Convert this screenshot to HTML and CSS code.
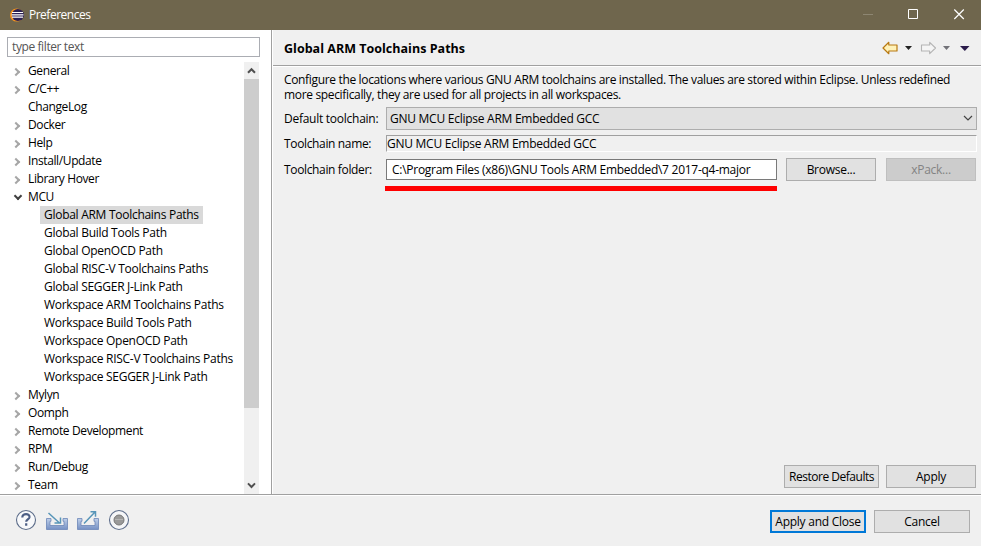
FILE: index.html
```
<!DOCTYPE html>
<html lang="en">
<head>
<meta charset="utf-8">
<title>Preferences</title>
<link rel="stylesheet" href="styles.css">
</head>
<body>
<div class="window">
  <header class="titlebar">
    <svg class="logo" width="14" height="14" viewBox="0 0 14 14"><circle cx="6.6" cy="7" r="6.6" fill="#f7941e"/><circle cx="7.9" cy="7" r="6.1" fill="#2c2255"/><path d="M2 4.5h11M1.5 6.8h12M2 9.1h11" stroke="#fff" stroke-width="1.2"/></svg>
    <span class="window-title">Preferences</span>
    <svg class="controls" width="112" height="30" viewBox="0 0 112 30" fill="none"><path d="M2 14.5h10" stroke="#8d8672"/><path d="M47.5 9.5h9v9h-9z" stroke="#fff"/><path d="M93.3 9.5l9.5 9.5m0-9.5L93.3 19" stroke="#fff" stroke-width="1.2"/></svg>
  </header>
  <main class="body">
    <aside class="sidebar">
      <div class="filter">type filter text</div>
      <div class="tree-wrap">
        <ul class="tree">
          <li class="closed"><span>General</span></li>
          <li class="closed"><span>C/C++</span></li>
          <li><span>ChangeLog</span></li>
          <li class="closed"><span>Docker</span></li>
          <li class="closed"><span>Help</span></li>
          <li class="closed"><span>Install/Update</span></li>
          <li class="closed"><span>Library Hover</span></li>
          <li class="open"><span>MCU</span></li>
          <li class="child selected"><span>Global ARM Toolchains Paths</span></li>
          <li class="child"><span>Global Build Tools Path</span></li>
          <li class="child"><span>Global OpenOCD Path</span></li>
          <li class="child"><span>Global RISC-V Toolchains Paths</span></li>
          <li class="child"><span>Global SEGGER J-Link Path</span></li>
          <li class="child"><span>Workspace ARM Toolchains Paths</span></li>
          <li class="child"><span>Workspace Build Tools Path</span></li>
          <li class="child"><span>Workspace OpenOCD Path</span></li>
          <li class="child"><span>Workspace RISC-V Toolchains Paths</span></li>
          <li class="child"><span>Workspace SEGGER J-Link Path</span></li>
          <li class="closed"><span>Mylyn</span></li>
          <li class="closed"><span>Oomph</span></li>
          <li class="closed"><span>Remote Development</span></li>
          <li class="closed"><span>RPM</span></li>
          <li class="closed"><span>Run/Debug</span></li>
          <li class="closed"><span>Team</span></li>
        </ul>
        <div class="scrollbar">
          <svg width="15" height="17" viewBox="0 0 15 17"><path d="M4 10.8l3.5-3.6 3.5 3.6" fill="none" stroke="#505050" stroke-width="2"/></svg>
          <div class="thumb"></div>
          <svg width="15" height="17" viewBox="0 0 15 17"><path d="M4 6.4l3.5 3.6L11 6.4" fill="none" stroke="#505050" stroke-width="2"/></svg>
        </div>
      </div>
    </aside>
    <section class="page">
      <div class="page-head">
        <h1>Global ARM Toolchains Paths</h1>
        <svg class="nav" width="90" height="14" viewBox="0 0 90 14">
          <path d="M1 7L6.8 1.3V4H15v6H6.8v2.7z" fill="#fff2b8" stroke="#b87912" stroke-width="1.2" stroke-linejoin="round"/>
          <path d="M23 5h7l-3.5 4z" fill="#222"/>
          <path d="M53.5 7L47.7 1.3V4H39.5v6h8.2v2.7z" fill="#f5f5f5" stroke="#b4b4b4" stroke-width="1.1" stroke-linejoin="round"/>
          <path d="M61 5h7l-3.5 4z" fill="#727278"/>
          <path d="M78 5h9.5l-4.7 5z" fill="#2b1c4b"/>
        </svg>
      </div>
      <div class="page-body">
        <p class="intro">Configure the locations where various GNU ARM toolchains are installed. The values are stored within Eclipse. Unless redefined<br>more specifically, they are used for all projects in all workspaces.</p>
        <div class="row row-combo"><label>Default toolchain:</label><div class="combo"><span>GNU MCU Eclipse ARM Embedded GCC</span><svg width="10" height="7" viewBox="0 0 10 7"><path d="M1 1l4 4 4-4" fill="none" stroke="#444" stroke-width="1.2"/></svg></div></div>
        <div class="row row-name"><label>Toolchain name:</label><div class="readonly">GNU MCU Eclipse ARM Embedded GCC</div></div>
        <div class="row row-folder"><label>Toolchain folder:</label><div class="folder">C:\Program Files (x86)\GNU Tools ARM Embedded\7 2017-q4-major</div><div class="btn browse">Browse...</div><div class="btn xpack">xPack...</div></div>
        <div class="underline"></div>
        <div class="page-actions"><div class="btn restore">Restore Defaults</div><div class="btn apply">Apply</div></div>
      </div>
    </section>
  </main>
  <footer class="footer">
    <svg class="tools" width="116" height="24" viewBox="0 0 116 24" fill="none">
      <defs><linearGradient id="tray" x1="0" y1="0" x2="0" y2="1"><stop offset="0" stop-color="#bfd0e9"/><stop offset="1" stop-color="#7590c4"/></linearGradient></defs>
      <circle cx="11" cy="12" r="9.5" fill="#f8f9fb" stroke="#5d6d8a" stroke-width="1.1"/>
      <path d="M7.3 9.4C7.2 4.9 15 5 14.5 9.2c-.3 2.1-3.2 2.4-3.3 4.5M11.2 15.3v2.5" stroke="#4c5e85" stroke-width="2.2"/>
      <path d="M31.5 10.5H36v2.8h-1v4.2h14v-4.2h-1v-2.8h4.5v11h-21z" fill="url(#tray)" stroke="#6c86b7" stroke-width=".8"/>
      <path d="M33.5 5l11 10M39.5 15h6V9.5" stroke="#5795b8" stroke-width="1.5"/>
      <path d="M62.5 10.5H67v2.8h-1v4.2h14v-4.2h-1v-2.8h4.5v11h-21z" fill="url(#tray)" stroke="#6c86b7" stroke-width=".8"/>
      <path d="M69 15.5L80 4M75.5 3.8h5v5" stroke="#5795b8" stroke-width="1.5"/>
      <circle cx="104" cy="12" r="9.5" fill="#f5f6f8" stroke="#5d6d8a" stroke-width="1.1"/><circle cx="104" cy="12" r="5" fill="#999" stroke="#777"/><path d="M100 11.5h8" stroke="#b5b5b5"/>
    </svg>
    <div class="footer-actions"><div class="btn close">Apply and Close</div><div class="btn cancel">Cancel</div></div>
  </footer>
</div>
</body>
</html>
```
FILE: styles.css
```
*, *::before { box-sizing: border-box; }
body { margin: 0; font: 12px/16px "Open Sans", "Noto Sans", sans-serif; color: #000; letter-spacing: -0.26px; }
.window { width: 981px; height: 546px; display: flex; flex-direction: column; background: #f0f0f0; overflow: hidden; white-space: nowrap; }
.titlebar { height: 30px; flex: none; background: #6f664d; color: #fff; display: flex; align-items: center; padding-left: 10px; }
.window-title { margin-left: 5px; letter-spacing: -0.5px; }
.controls { margin-left: auto; margin-right: 8px; }
.body { height: 464px; flex: none; display: flex; }
.sidebar { width: 271px; flex: none; background: #fff; padding: 7px 0 0 7px; }
.filter { width: 253px; height: 20px; border: 1px solid #abadb3; padding: 1px 4px; color: #555; letter-spacing: -0.4px; }
.tree-wrap { display: flex; width: 253px; height: 432px; margin-top: 5px; }
.tree { width: 237px; margin: 0; padding: 0; list-style: none; letter-spacing: -0.38px; }
.tree li { height: 18px; padding-left: 21px; display: flex; align-items: center; position: relative; line-height: 18px; }
.tree .child { padding-left: 33px; letter-spacing: -0.28px; }
.tree .child span { padding: 0 4px; }
.tree .selected span { background: #d9d9d9; }
.closed::before, .open::before { content: ""; position: absolute; width: 6px; height: 6px; border: solid #a6a6a6; border-width: 2px 2px 0 0; transform: rotate(45deg); left: 6px; top: 7px; }
.open::before { border-color: #404040; transform: rotate(135deg); left: 8px; top: 5px; }
.scrollbar { width: 15px; background: #f0f0f0; display: flex; flex-direction: column; }
.scrollbar svg { flex: none; }
.thumb { height: 329px; background: #cdcdcd; margin-bottom: auto; }
.page { flex: 1; border-left: 1px solid #a0a0a0; display: flex; flex-direction: column; min-width: 0; box-shadow: inset 1px 0 #fff; }
.page-head { height: 37px; flex: none; border-bottom: 1px solid #fff; box-shadow: inset 0 -1px #a0a0a0; display: flex; align-items: center; padding: 0 9px 0 11px; justify-content: space-between; margin-left: 1px; }
h1 { margin: 2px 0 0; font-size: 12.5px; font-weight: 700; letter-spacing: 0.02px; }
.page-body { flex: 1; padding: 5px 4px 6px 12px; display: flex; flex-direction: column; }
.intro { margin: 0; line-height: 15px; letter-spacing: -0.34px; }
.row { display: flex; align-items: center; }
.row label { width: 102px; flex: none; }
.row-combo { height: 23px; margin-top: 5px; }
.combo { flex: 1; height: 23px; background: #e1e1e1; border: 1px solid #adadad; display: flex; align-items: center; justify-content: space-between; padding: 0 3px; }
.row-name { height: 17px; margin-top: 5px; }
.row-name label, .row-folder label { letter-spacing: -0.35px; }
.readonly { flex: 1; height: 17px; border: 1px solid; border-color: #a0a0a0 #fff #fff #a0a0a0; line-height: 15px; }
.row-folder { height: 23px; margin-top: 6px; }
.folder { width: 391px; height: 21px; border: 1px solid #7a7a7a; background: #fff; line-height: 19px; padding-left: 5px; letter-spacing: -0.27px; }
.btn { height: 23px; border: 1px solid #adadad; background: #e1e1e1; display: flex; align-items: center; justify-content: center; }
.browse { width: 90px; margin-left: 9px; }
.xpack { width: 90px; margin-left: 10px; background: #ccc; border-color: #bfbfbf; color: #838383; }
.underline { width: 392px; height: 5px; background: #f00; margin: 5px 0 0 101px; }
.page-actions { margin-top: auto; display: flex; justify-content: flex-end; gap: 7px; padding-right: 1px; }
.restore { width: 95px; letter-spacing: -0.48px; }
.apply { width: 90px; }
.footer { flex: 1; border-top: 1px solid #a0a0a0; box-shadow: inset 0 1px #fff; display: flex; align-items: center; justify-content: space-between; padding: 2px 11px 0 15px; }
.tools { margin-bottom: 4px; }
.footer-actions { display: flex; gap: 8px; }
.close, .cancel { width: 96px; }
.close { border: 2px solid #0078d7; }
```
